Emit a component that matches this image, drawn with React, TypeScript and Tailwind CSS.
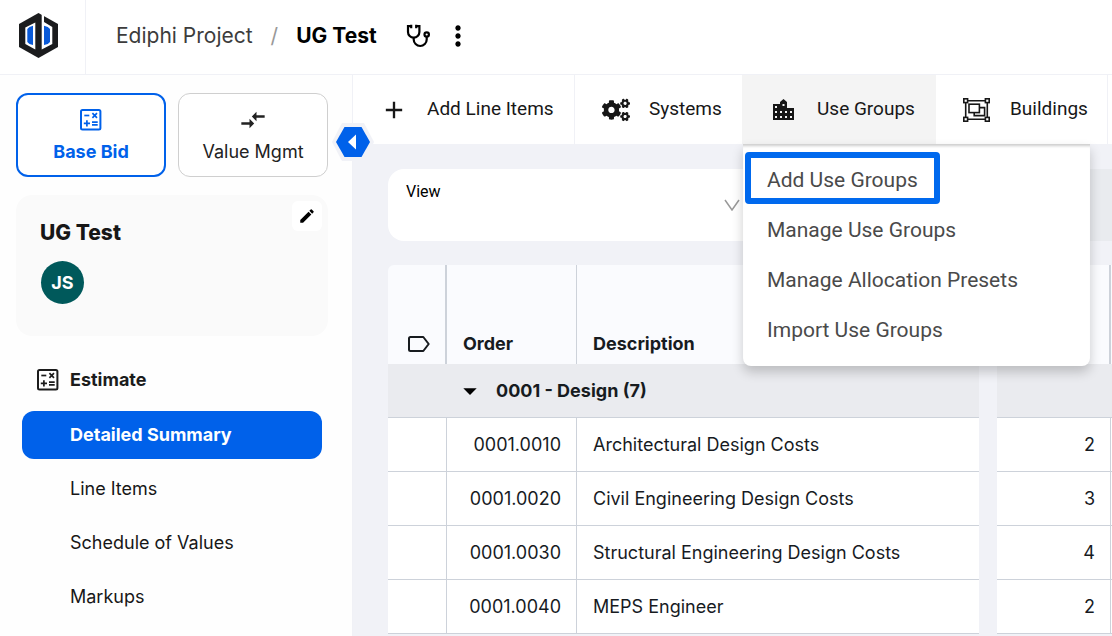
import { useState } from 'react';
import { FaCogs } from 'react-icons/fa';
import { MdAdd, MdArrowDropDown, MdCompareArrows, MdEdit, MdMoreVert } from 'react-icons/md';

const navItems = ['Detailed Summary', 'Line Items', 'Schedule of Values', 'Markups'];

const menuItems = [
  'Add Use Groups',
  'Manage Use Groups',
  'Manage Allocation Presets',
  'Import Use Groups',
];

const rows = [
  { order: '0001.0010', description: 'Architectural Design Costs', qty: 2 },
  { order: '0001.0020', description: 'Civil Engineering Design Costs', qty: 3 },
  { order: '0001.0030', description: 'Structural Engineering Design Costs', qty: 4 },
  { order: '0001.0040', description: 'MEPS Engineer', qty: 2 },
];

function Logo() {
  return (
    <svg width="40" height="46" viewBox="0 0 40 46" aria-label="Ediphi">
      <path d="M19.5 0 L39 11 V34 L19.5 45 L0 34 V11 Z" fill="#1b1c1e" />
      <path d="M16.3 9.5 V36.5 L6.3 31 V14.5 Z" fill="#fff" />
      <path d="M22.7 0 L25 0 V9 L33.3 14 V31 L22.7 36.5 Z" fill="#fff" />
      <path d="M14 12.8 V32 L10.5 31 L8.3 29 V16 L10.5 14 Z" fill="#0a5ad8" />
      <path d="M25 12.8 V32 L28.8 31 L31 29 V16 L28.8 14 Z" fill="#0a5ad8" />
    </svg>
  );
}

function StethoscopeIcon() {
  return (
    <svg
      width="26"
      height="26"
      viewBox="0 0 26 26"
      fill="none"
      stroke="#000"
      strokeWidth="2.2"
    >
      <path d="M6.5 3.2 H3 V9 a5.7 5.7 0 0 0 11.4 0 V3.2 H10.9" />
      <path d="M6.2 1.7 V5.2 M11.2 1.7 V5.2" />
      <path d="M8.7 14.8 V16.5 a6.5 6.5 0 0 0 13 0 V13.8" />
      <circle cx="21.7" cy="11.5" r="2.2" />
    </svg>
  );
}

function CalculatorIcon() {
  return (
    <svg
      className="size-7"
      viewBox="-3 -3 28 28"
      fill="none"
      stroke="currentColor"
      strokeWidth="1.7"
    >
      <rect x="1" y="1" width="19.4" height="19.4" rx="1.5" strokeWidth="2" />
      <path d="M4.3 6.5 H9.3" />
      <path d="M12.4 4.2 L17 8.8 M17 4.2 L12.4 8.8" />
      <path d="M3.8 14.4 H10 M6.9 11.3 V17.5" />
      <path d="M12 13.1 H17.7 M12 15.8 H17.7" />
    </svg>
  );
}

function BuildingIcon() {
  return (
    <svg className="mr-[19px] size-7" viewBox="-3 -3 28 28" fill="currentColor">
      <path
        fillRule="evenodd"
        d="M0 5 H7 V3 L10.5 0 L14 3 V9 H21 V21 H0 Z
          M2 7 V9 H4 V7 Z M9.5 5 V7 H11.5 V5 Z
          M2 12 V14 H4 V12 Z M7 12 V14 H9 V12 Z M12 12 V14 H14 V12 Z M17 12 V14 H19 V12 Z
          M2 17 V19 H4 V17 Z M7 17 V19 H9 V17 Z M12 17 V19 H14 V17 Z M17 17 V19 H19 V17 Z"
      />
    </svg>
  );
}

function ObjectGroupIcon() {
  return (
    <svg
      className="mr-[19px] size-7"
      viewBox="0 -2 28 28"
      fill="none"
      stroke="currentColor"
      strokeWidth="1.6"
    >
      <path d="M5 2.7 H22 M5 21.3 H22 M2.7 5 V19 M24.3 5 V19" />
      <rect x="0.8" y="0.8" width="3.8" height="3.8" />
      <rect x="22.4" y="0.8" width="3.8" height="3.8" />
      <rect x="0.8" y="19.4" width="3.8" height="3.8" />
      <rect x="22.4" y="19.4" width="3.8" height="3.8" />
      <rect x="6" y="6.2" width="10.4" height="8.4" />
      <path d="M17 9.6 H21.6 V17.6 H11.2 V15" />
    </svg>
  );
}

function TagIcon() {
  return (
    <svg
      width="22"
      height="16"
      viewBox="0 0 22 16"
      fill="none"
      stroke="currentColor"
      strokeWidth="2"
      strokeLinejoin="round"
    >
      <path d="M2.5 1 H15.3 L20.7 8 L15.3 15 H2.5 Q1 15 1 13.5 V2.5 Q1 1 2.5 1 Z" />
    </svg>
  );
}

function Header() {
  return (
    <header className="flex h-[75px] shrink-0 border-b border-[#f0f1f6] bg-white">
      <a href="#" className="flex w-[86px] items-center border-r border-[#f0f1f6] pb-0.5 pl-[19px]">
        <Logo />
      </a>
      <div className="flex items-center pb-0.5 pl-[30px] text-[21px]">
        <a href="#" className="text-[#3c3c3c]">Ediphi Project</a>
        <span className="px-[18px] text-[#999]">/</span>
        <h1 className="font-bold text-black">UG Test</h1>
        <button type="button" aria-label="Health check" className="ml-7">
          <StethoscopeIcon />
        </button>
        <button type="button" aria-label="More" className="ml-[11px]">
          <MdMoreVert className="size-8 text-black" />
        </button>
      </div>
    </header>
  );
}

function Sidebar() {
  const [active, setActive] = useState('Detailed Summary');

  return (
    <aside className="relative z-10 w-[353px] shrink-0 border-r border-[#f0f1f6] bg-[#fefefe] pt-[18px] pr-6 pl-4">
      <div className="grid grid-cols-2 gap-3 text-lg">
        <button
          type="button"
          className="flex h-[84px] flex-col items-center justify-center gap-1 rounded-xl border-2 border-[#0061ea] bg-white pt-0.5 font-bold text-[#0061ea]"
        >
          <CalculatorIcon />
          Base Bid
        </button>
        <button
          type="button"
          className="flex h-[84px] flex-col items-center justify-center gap-1 rounded-xl border border-[#cfcfcf] bg-white pt-0.5 text-[#222]"
        >
          <MdCompareArrows className="size-7" />
          Value Mgmt
        </button>
      </div>

      <section className="relative mt-[18px] h-[141px] rounded-2xl bg-[#fafafa] px-6 pt-6">
        <h2 className="text-[21px] leading-7 font-extrabold text-[#171717]">UG Test</h2>
        <div className="mt-3.5 ml-px flex size-[43px] items-center justify-center rounded-full bg-[#00595b] text-lg font-bold text-white">
          JS
        </div>
        <button
          type="button"
          aria-label="Edit"
          className="absolute top-1.5 right-1.5 flex size-[30px] items-center justify-center rounded-md bg-white"
        >
          <MdEdit className="size-[18px] text-black" />
        </button>
      </section>

      <nav className="mt-5 px-1.5 text-lg">
        <div className="flex h-[48px] items-center gap-2 pl-3 font-bold text-[#1c1c1c]">
          <CalculatorIcon />
          Estimate
        </div>
        <ul className="mt-[7px] flex flex-col gap-1.5">
          {navItems.map((item) => (
            <li key={item}>
              <a
                href="#"
                onClick={() => setActive(item)}
                className={
                  item === active
                    ? 'flex h-12 items-center rounded-xl bg-[#0061ea] pl-12 font-bold text-white'
                    : 'flex h-12 items-center rounded-xl pl-12 text-[#171717]'
                }
              >
                {item}
              </a>
            </li>
          ))}
        </ul>
      </nav>

      <button type="button" aria-label="Collapse sidebar" className="absolute top-12 -right-[22px]">
        <svg width="42" height="38" viewBox="0 0 42 38">
          <path d="M10 0 H32 L42 19 L32 38 H10 L0 19 Z" fill="#f1f2f7" />
          <path d="M12.5 4 H29.5 L38 19 L29.5 34 H12.5 L4 19 Z" fill="#0061ea" />
          <path d="M24 11.5 V26.5 L16 19 Z" fill="#fff" />
        </svg>
      </button>
    </aside>
  );
}

function UseGroupsMenu() {
  return (
    <div className="absolute top-full left-px z-20 w-[347px] rounded-b-lg bg-white pt-3 pb-2.5 shadow-[0_6px_12px_rgba(0,0,0,0.2),inset_0_4px_3px_-2px_rgba(0,0,0,0.2)]">
      <ul>
        {menuItems.map((item) => (
          <li key={item}>
            <a href="#" className="flex h-[50px] items-center pl-6 text-[21px] text-[#4a4a4a]">
              {item}
            </a>
          </li>
        ))}
      </ul>
      <span className="absolute top-2 left-0.5 h-[52px] w-[195px] rounded-sm border-6 border-[#0069ee]" />
    </div>
  );
}

function Toolbar() {
  return (
    <div className="flex h-[69px] bg-white font-['Roboto',sans-serif] text-[19px] text-[#171717]">
      <button type="button" className="flex w-[223px] items-center border-r border-[#f0f1f6] pl-7">
        <MdAdd className="mr-[19px] size-7" />
        Add Line Items
      </button>
      <button type="button" className="flex w-[167px] items-center pl-[27px]">
        <FaCogs className="mr-[19px] size-7" />
        Systems
      </button>
      <div className="relative w-[194px] bg-[#f4f4f4]">
        <button type="button" className="flex size-full items-center pl-7">
          <BuildingIcon />
          Use Groups
        </button>
        <UseGroupsMenu />
      </div>
      <button type="button" className="flex w-[172px] items-center border-r border-[#f0f1f6] pl-[27px]">
        <ObjectGroupIcon />
        Buildings
      </button>
    </div>
  );
}

function ViewSelect() {
  return (
    <div className="mt-[25px] ml-9 flex h-[72px]">
      <div className="relative w-[370px] rounded-l-2xl bg-white">
        <label
          htmlFor="view"
          className="absolute top-[11px] left-[18px] font-['Roboto',sans-serif] text-base text-black"
        >
          View
        </label>
        <select id="view" className="size-full appearance-none rounded-l-2xl bg-transparent px-4 pt-6" />
        <svg
          className="pointer-events-none absolute top-[30px] right-[18px]"
          width="16"
          height="12"
          viewBox="0 0 16 12"
          fill="none"
          stroke="#999"
          strokeWidth="1.5"
        >
          <path d="M1 1 L8 11 L15 1" />
        </svg>
      </div>
      <div className="flex-1 bg-[#e9ebef]" />
    </div>
  );
}

function EstimateTable() {
  return (
    <div className="mt-6 ml-9 overflow-hidden rounded-tl-md">
      <table className="w-full table-fixed border-separate border-spacing-0 text-lg text-[#171b1f]">
        <colgroup>
          <col className="w-[59px]" />
          <col className="w-[130px]" />
          <col />
          <col className="w-[18px]" />
          <col className="w-[114px]" />
          <col className="w-px" />
        </colgroup>
        <thead>
          <tr className="h-[99px] bg-[#fafbfe] text-left align-bottom">
            <th aria-label="Tag" className="border-r-2 border-[#cdd2da] pb-3 pl-5">
              <TagIcon />
            </th>
            <th className="border-r border-[#cdd2da] pb-1.5 pl-4 font-bold">Order</th>
            <th className="pb-1.5 pl-4 font-bold">Description</th>
            <td className="bg-[#f1f2f7]" />
            <td className="border-r-2 border-[#cdd2da]" />
            <td />
          </tr>
        </thead>
        <tbody>
          <tr className="h-[54px] bg-[#eaebef]">
            <td className="border-b border-[#cdd2da]" />
            <th colSpan={2} className="border-b border-[#cdd2da] text-left font-bold">
              <button type="button" className="flex items-center gap-2.5 pl-[7px]">
                <MdArrowDropDown className="size-8 text-black" />
                0001 - Design (7)
              </button>
            </th>
            <td className="bg-[#f1f2f7]" />
            <td colSpan={2} className="border-b border-[#cdd2da]" />
          </tr>
          {rows.map((row) => (
            <tr key={row.order} className="h-[54px] bg-white">
              <td className="border-r border-b border-[#cdd2da]" />
              <td className="border-r border-b border-[#cdd2da] pr-[15px] text-right">{row.order}</td>
              <td className="border-b border-[#cdd2da] pl-4">{row.description}</td>
              <td className="bg-[#f1f2f7]" />
              <td className="border-r border-b border-[#cdd2da] pr-[15px] text-right">{row.qty}</td>
              <td className="border-b border-[#cdd2da]" />
            </tr>
          ))}
        </tbody>
      </table>
    </div>
  );
}

export default function App() {
  return (
    <div className="flex h-screen flex-col overflow-hidden bg-[#f1f2f7] font-['Inter',sans-serif]">
      <Header />
      <div className="flex min-h-0 flex-1">
        <Sidebar />
        <main className="-ml-px min-w-0 flex-1">
          <Toolbar />
          <ViewSelect />
          <EstimateTable />
        </main>
      </div>
    </div>
  );
}
